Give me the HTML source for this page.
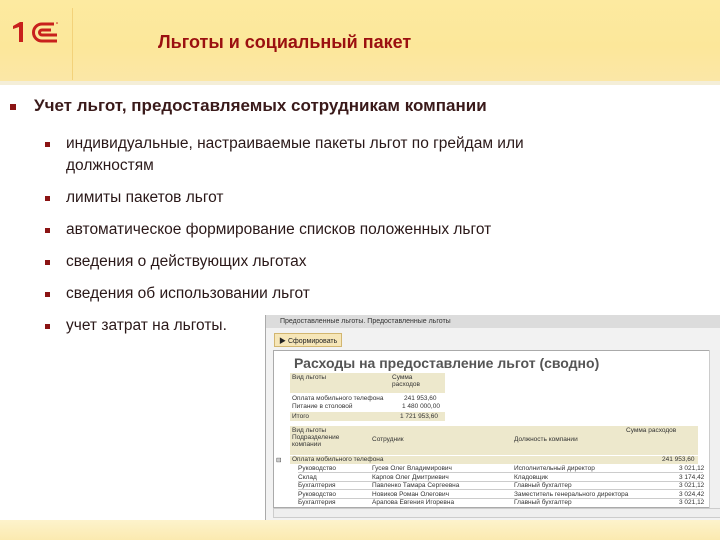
<!DOCTYPE html>
<html><head><meta charset="utf-8"><style>
*{margin:0;padding:0;box-sizing:border-box}
body{width:720px;height:540px;overflow:hidden;background:#fff;position:relative;font-family:"Liberation Sans","Noto Sans CJK SC",sans-serif}
.hdr{position:absolute;left:0;top:0;width:720px;height:85px;background:linear-gradient(180deg,#fdeaa0 0%,#fce79a 55%,#fbe7a8 100%)}
.hdr:after{content:"";position:absolute;left:0;right:0;bottom:0;height:4px;background:#f4eed8}
.vl{position:absolute;left:72px;top:8px;width:1px;height:72px;background:#f3d27a}
.title{position:absolute;left:158px;top:32px;font-size:18px;font-weight:bold;color:#9b1010}
.b1{position:absolute;left:10px;top:104px;width:6px;height:6px;background:#8b1414}
.l1{position:absolute;left:34px;top:96px;font-size:17px;font-weight:bold;color:#3a1a1a}
.b2{position:absolute;left:45px;width:5px;height:5px;background:#8b1414}
.l2{position:absolute;left:66px;font-size:15.5px;color:#2a1818;line-height:22px}
.bot{position:absolute;left:0;top:520px;width:720px;height:20px;background:linear-gradient(180deg,#fdf3cc,#fbeab0)}
.win{position:absolute;left:265px;top:315px;width:455px;height:205px;background:#f2f2f2;border-left:1px solid #aaa}
.tb{position:absolute;left:0;top:0;width:455px;height:13px;background:#dcdcdc;font-size:7px;color:#333;padding:3px 0 0 14px}
.btn{position:absolute;left:8px;top:18px;width:68px;height:14px;background:#f6e6b8;border:1px solid #d2b670;font-size:7px;color:#222;padding:2px 0 0 4px}
.rep{position:absolute;left:7px;top:35px;width:448px;height:158px;background:#fff;border:1px solid #aaa}
.h2{position:absolute;left:20px;top:4px;font-size:14px;font-weight:bold;color:#555}
.t{position:absolute;font-size:6.5px;color:#333}
.bg{position:absolute;background:#ede8cc}
.sb{position:absolute;left:7px;top:193px;width:448px;height:10px;background:#eee;border:1px solid #ccc}
.vs{position:absolute;left:443px;top:35px;width:12px;height:158px;background:#f0f0f0;border-left:1px solid #ccc}
.rw{position:absolute;left:24px;width:405px;height:1px;background:#ccc}
</style></head><body>
<div class="hdr">
<svg style="position:absolute;left:12px;top:20px" width="48" height="26" viewBox="0 0 48 26">
<path d="M1 6L8 2h3v20H7V7L1 9z" fill="#c8201c"/>
<path d="M42 4H30A8.5 8.5 0 0 0 30 21H45" fill="none" stroke="#c8201c" stroke-width="3"/>
<path d="M39 10H30A2.5 2.5 0 0 0 30 15H45" fill="none" stroke="#c8201c" stroke-width="3"/>
<circle cx="45" cy="3" r="0.8" fill="#c8201c"/>
</svg>
<div class="vl"></div>
<div class="title">Льготы и социальный пакет</div>
</div>
<div class="b1"></div>
<div class="l1">Учет льгот, предоставляемых сотрудникам компании</div>
<div class="b2" style="top:142px"></div><div class="l2" style="top:133px">индивидуальные, настраиваемые пакеты льгот по грейдам или<br>должностям</div>
<div class="b2" style="top:196px"></div><div class="l2" style="top:187px">лимиты пакетов льгот</div>
<div class="b2" style="top:228px"></div><div class="l2" style="top:219px">автоматическое формирование списков положенных льгот</div>
<div class="b2" style="top:260px"></div><div class="l2" style="top:251px">сведения о действующих льготах</div>
<div class="b2" style="top:292px"></div><div class="l2" style="top:283px">сведения об использовании льгот</div>
<div class="b2" style="top:324px"></div><div class="l2" style="top:315px">учет затрат на льготы.</div>
<div class="win">
<div class="tb">Предоставленные льготы. Предоставленные льготы</div>
<div class="btn">▶ Сформировать</div>
<div class="rep">
<div class="h2">Расходы на предоставление льгот (сводно)</div>
<div class="bg" style="left:16px;top:22px;width:155px;height:20px"></div>
<div class="bg" style="left:16px;top:61px;width:155px;height:9px"></div>
<div class="t" style="left:18px;top:23px">Вид льготы</div>
<div class="t" style="left:118px;top:23px">Сумма<br>расходов</div>
<div class="t" style="left:18px;top:44px">Оплата мобильного телефона</div><div class="t" style="left:130px;top:44px">241 953,60</div>
<div class="t" style="left:18px;top:52px">Питание в столовой</div><div class="t" style="left:128px;top:52px">1 480 000,00</div>
<div class="t" style="left:18px;top:62px">Итого</div><div class="t" style="left:126px;top:62px">1 721 953,60</div>
<div class="bg" style="left:16px;top:75px;width:408px;height:29px"></div>
<div class="bg" style="left:16px;top:105px;width:408px;height:8px"></div>
<div class="t" style="left:18px;top:76px">Вид льготы<br>Подразделение<br>компании</div>
<div class="t" style="left:98px;top:85px">Сотрудник</div>
<div class="t" style="left:240px;top:85px">Должность компании</div>
<div class="t" style="left:352px;top:76px">Сумма расходов</div>
<div class="t" style="left:2px;top:105px">⊟</div>
<div class="t" style="left:18px;top:105px">Оплата мобильного телефона</div><div class="t" style="left:388px;top:105px">241 953,60</div>
<div class="rw" style="top:121px"></div><div class="rw" style="top:130px"></div><div class="rw" style="top:138px"></div><div class="rw" style="top:147px"></div>
<div class="t" style="left:24px;top:114px;line-height:8.5px">Руководство<br>Склад<br>Бухгалтерия<br>Руководство<br>Бухгалтерия</div>
<div class="t" style="left:98px;top:114px;line-height:8.5px">Гусев Олег Владимирович<br>Карпов Олег Дмитриевич<br>Павленко Тамара Сергеевна<br>Новиков Роман Олегович<br>Арапова Евгения Игоревна</div>
<div class="t" style="left:240px;top:114px;line-height:8.5px">Исполнительный директор<br>Кладовщик<br>Главный бухгалтер<br>Заместитель генерального директора<br>Главный бухгалтер</div>
<div class="t" style="left:405px;top:114px;line-height:8.5px">3 021,12<br>3 174,42<br>3 021,12<br>3 024,42<br>3 021,12</div>
</div>
<div class="vs"></div>
<div class="sb"></div>
</div>
<div class="bot"></div>
</body></html>
